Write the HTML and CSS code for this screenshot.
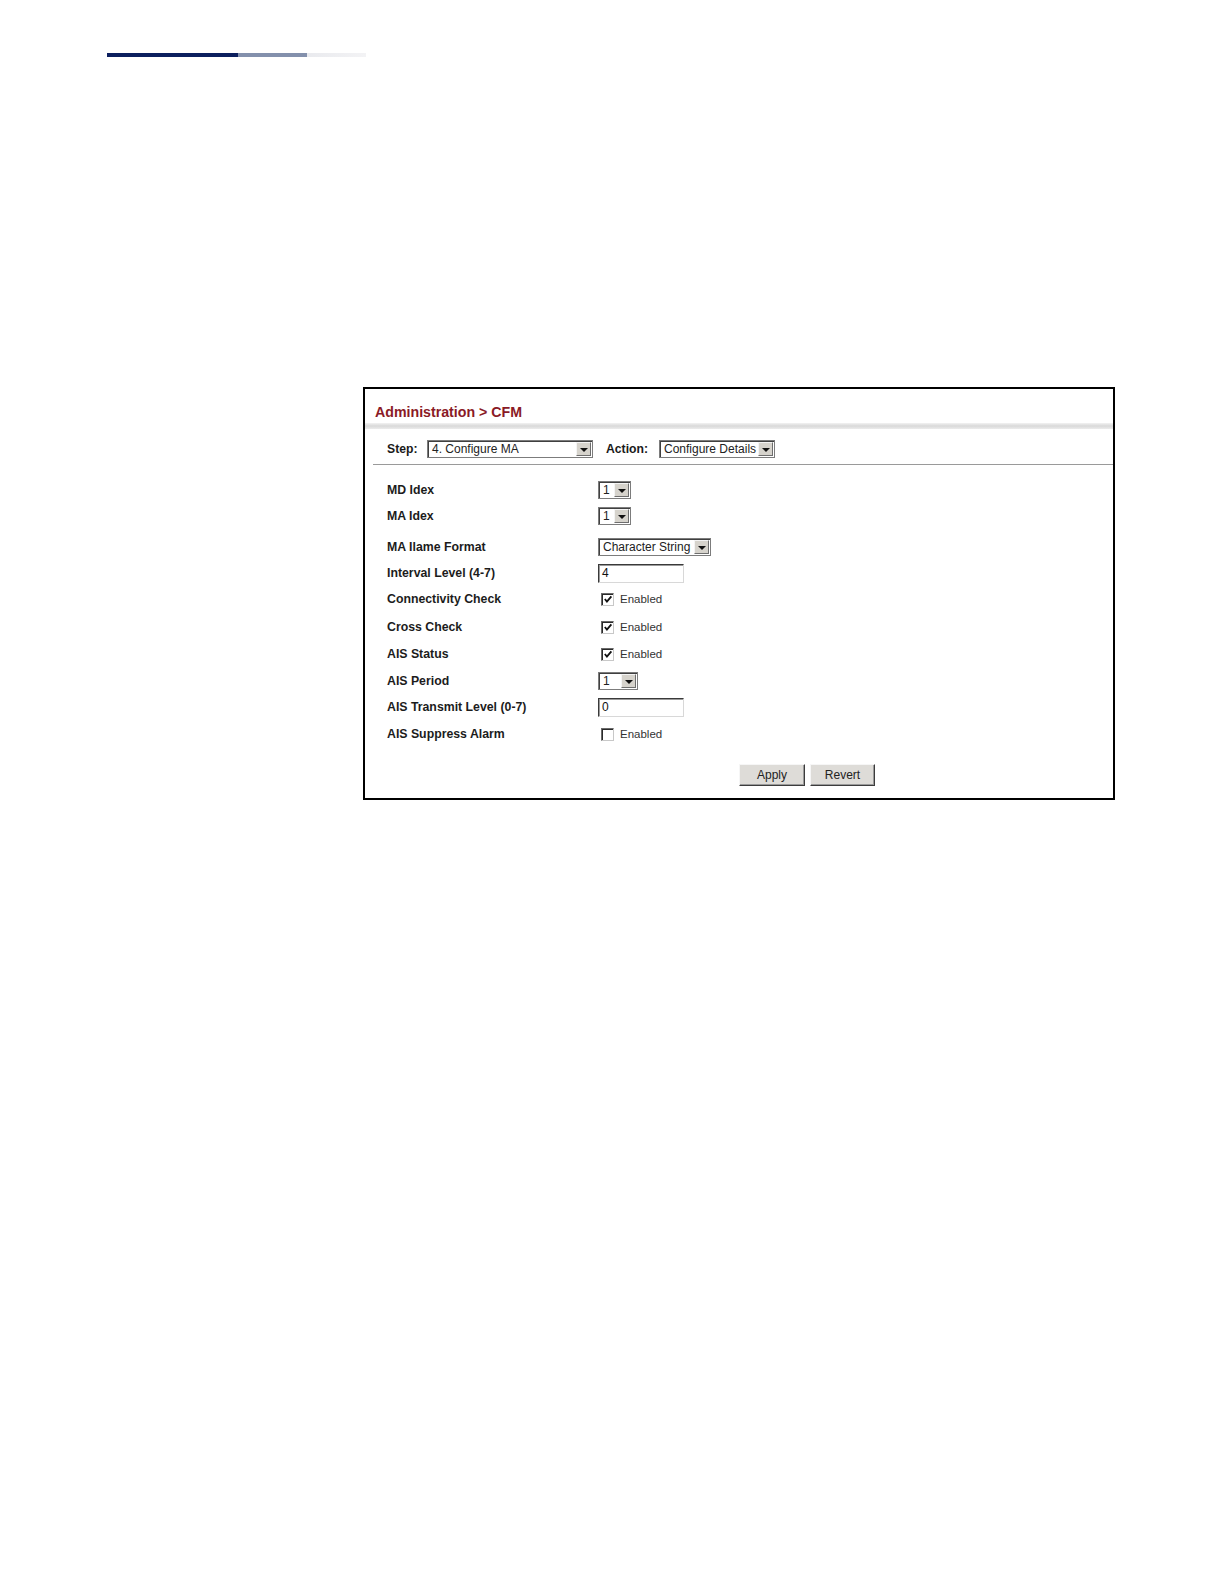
FILE: index.html
```html
<!DOCTYPE html>
<html>
<head>
<meta charset="utf-8">
<title>Administration &gt; CFM</title>
<link rel="stylesheet" href="styles.css">
</head>
<body>
<div class="page">
  <div class="topbar"><span class="seg seg1"></span><span class="seg seg2"></span><span class="seg seg3"></span></div>

  <div class="figure">
    <div class="title">Administration &gt; CFM</div>
    <div class="band"></div>

    <div class="steprow">
      <span class="steplabel">Step:</span>
      <span class="select w-step"><span class="val">4. Configure MA</span><span class="arrow"><i></i></span></span>
      <span class="actionlabel">Action:</span>
      <span class="select w-action"><span class="val">Configure Details</span><span class="arrow"><i></i></span></span>
    </div>
    <div class="rule"></div>

    <div class="form">
      <div class="row">
        <span class="label">MD Idex</span>
        <span class="select w-small"><span class="val">1</span><span class="arrow"><i></i></span></span>
      </div>
      <div class="row">
        <span class="label">MA Idex</span>
        <span class="select w-small"><span class="val">1</span><span class="arrow"><i></i></span></span>
      </div>
      <div class="row gap5">
        <span class="label">MA Ilame Format</span>
        <span class="select w-format"><span class="val">Character String</span><span class="arrow"><i></i></span></span>
      </div>
      <div class="row">
        <span class="label">Interval Level (4-7)</span>
        <span class="input">4</span>
      </div>
      <div class="row">
        <span class="label">Connectivity Check</span>
        <span class="check on"><svg viewBox="0 0 11 11" width="11" height="11"><path d="M2 5 L4.3 7.8 L9.2 2" fill="none" stroke="#111" stroke-width="2"/></svg></span>
        <span class="enabled">Enabled</span>
      </div>
      <div class="row gap2">
        <span class="label">Cross Check</span>
        <span class="check on"><svg viewBox="0 0 11 11" width="11" height="11"><path d="M2 5 L4.3 7.8 L9.2 2" fill="none" stroke="#111" stroke-width="2"/></svg></span>
        <span class="enabled">Enabled</span>
      </div>
      <div class="row gap1">
        <span class="label">AIS Status</span>
        <span class="check on"><svg viewBox="0 0 11 11" width="11" height="11"><path d="M2 5 L4.3 7.8 L9.2 2" fill="none" stroke="#111" stroke-width="2"/></svg></span>
        <span class="enabled">Enabled</span>
      </div>
      <div class="row gap1">
        <span class="label">AIS Period</span>
        <span class="select w-period"><span class="val">1</span><span class="arrow"><i></i></span></span>
      </div>
      <div class="row">
        <span class="label">AIS Transmit Level (0-7)</span>
        <span class="input">0</span>
      </div>
      <div class="row gap1">
        <span class="label">AIS Suppress Alarm</span>
        <span class="check"></span>
        <span class="enabled">Enabled</span>
      </div>
    </div>

    <div class="buttons">
      <span class="btn w-apply">Apply</span>
      <span class="btn w-revert">Revert</span>
    </div>
  </div>
</div>
</body>
</html>
```
FILE: styles.css
```css
html, body {
  margin: 0;
  padding: 0;
  background: #ffffff;
}

.page {
  padding-top: 53px;
  font-family: "Liberation Sans", Arial, sans-serif;
}

.topbar {
  display: flex;
  margin-left: 107px;
  height: 4px;
}
.seg { display: block; height: 4px; }
.seg1 { width: 131px; background: #0c1f5e; }
.seg2 { width: 69px; background: #8390ac; }
.seg3 { width: 59px; background: linear-gradient(to right, #e9eaee, #f3f3f5); }

.figure {
  margin-top: 330px;
  margin-left: 363px;
  width: 752px;
  height: 413px;
  box-sizing: border-box;
  border: 2px solid #000;
  background: #fff;
}

.title {
  padding: 15px 0 0 10px;
  font-size: 14.2px;
  line-height: 16px;
  font-weight: bold;
  color: #8a1a26;
}

.band {
  margin-top: 3px;
  height: 6px;
  background: linear-gradient(to bottom, #f2f2f2 0%, #d9d9d9 50%, #ececec 100%);
}

.steprow {
  display: flex;
  align-items: center;
  margin-top: 11px;
  height: 18px;
  padding-left: 22px;
  font-size: 12.2px;
  color: #1a1a1a;
}
.steplabel { width: 40px; font-weight: bold; }
.actionlabel { width: 53px; margin-left: 13px; font-weight: bold; }

.rule {
  margin: 6px 0 0 8px;
  height: 1px;
  background: #9a9a9a;
}

/* select look-alike */
.select {
  display: inline-flex;
  align-items: stretch;
  box-sizing: border-box;
  height: 18px;
  border: 1px solid #7c7c7c;
  box-shadow: inset 1px 1px 0 #404040;
  background: #fff;
  font-size: 12px;
  color: #222;
}
.select .val {
  flex: 1;
  padding-left: 4px;
  line-height: 16px;
  white-space: nowrap;
  overflow: hidden;
}
.select .arrow {
  width: 15px;
  margin: 1px 1px 1px 0;
  box-sizing: border-box;
  background: #d6d3cc;
  border: 1px solid;
  border-color: #f4f4f4 #6e6e6e #6e6e6e #f4f4f4;
  display: flex;
  align-items: center;
  justify-content: center;
}
.select .arrow i {
  display: block;
  width: 0;
  height: 0;
  border-left: 4px solid transparent;
  border-right: 4px solid transparent;
  border-top: 4px solid #111;
  margin-top: 1px;
}
.w-step { width: 166px; }
.w-action { width: 116px; }
.w-small { width: 33px; }
.w-period { width: 40px; }
.w-format { width: 113px; }

.form {
  padding-top: 12px;
}
.row {
  display: flex;
  align-items: center;
  height: 26px;
  padding-left: 22px;
}
.gap5 { margin-top: 5px; }
.gap2 { margin-top: 2px; }
.gap1 { margin-top: 1px; }

.label {
  width: 211px;
  font-size: 12.3px;
  font-weight: bold;
  color: #1c1c1c;
}

.input {
  box-sizing: border-box;
  width: 86px;
  height: 19px;
  border: 1px solid;
  border-color: #3a3a3a #d8d8d8 #d8d8d8 #3a3a3a;
  box-shadow: inset 1px 1px 0 #9a9a9a;
  padding-left: 3px;
  font-size: 12px;
  line-height: 17px;
  color: #111;
}

.check {
  box-sizing: border-box;
  width: 13px;
  height: 13px;
  margin-left: 3px;
  border: 1px solid;
  border-color: #6a6a6a #c8c8c8 #c8c8c8 #6a6a6a;
  box-shadow: inset 1px 1px 0 #2a2a2a;
  background: #fff;
  display: flex;
  align-items: center;
  justify-content: center;
}
.check svg { display: block; margin: 1px 0 0 1px; }

.enabled {
  margin-left: 6px;
  font-size: 11.5px;
  color: #333;
}

.buttons {
  display: flex;
  gap: 5px;
  margin-top: 17px;
  padding-left: 374px;
}
.btn {
  box-sizing: border-box;
  height: 22px;
  display: flex;
  align-items: center;
  justify-content: center;
  background: #dedcd8;
  border: 1px solid;
  border-color: #f6f6f6 #3c3c3c #3c3c3c #f6f6f6;
  box-shadow: inset -1px -1px 0 #9a9a9a;
  font-size: 12px;
  color: #222;
}
.w-apply { width: 66px; }
.w-revert { width: 65px; }
```
